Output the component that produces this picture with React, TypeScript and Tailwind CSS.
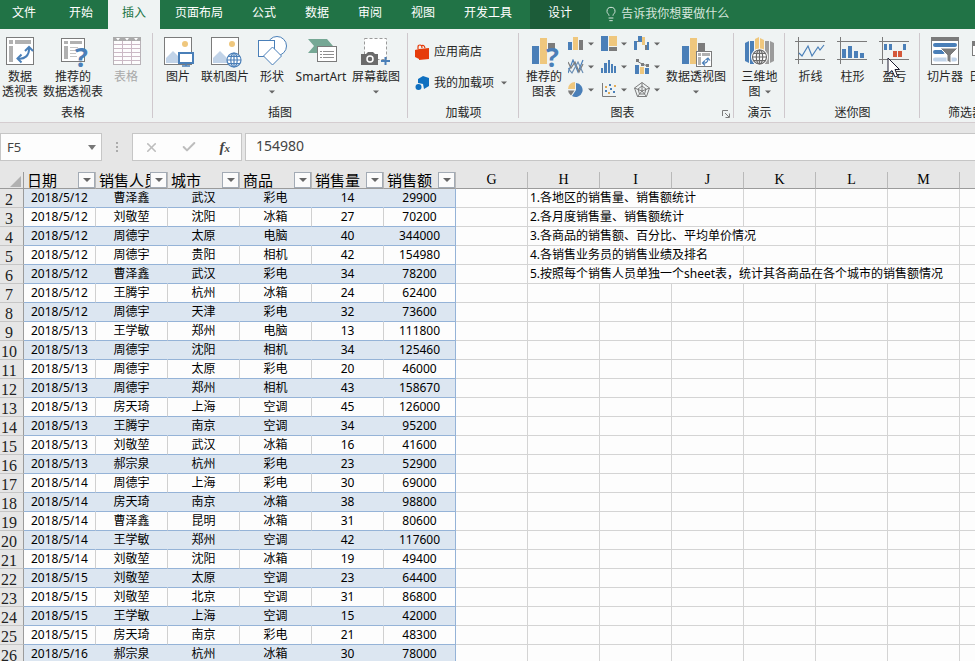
import React from 'react';
import clsx from 'clsx';
import { Check, Lightbulb, X } from 'lucide-react';

const tabs = ['开始', '插入', '页面布局', '公式', '数据', '审阅', '视图', '开发工具'];

const headers = ['日期', '销售人员', '城市', '商品', '销售量', '销售额'];
const letters = ['G', 'H', 'I', 'J', 'K', 'L', 'M', 'N'];

const rows: [string, string, string, string, number, number][] = [
  ['2018/5/12', '曹泽鑫', '武汉', '彩电', 14, 29900],
  ['2018/5/12', '刘敬堃', '沈阳', '冰箱', 27, 70200],
  ['2018/5/12', '周德宇', '太原', '电脑', 40, 344000],
  ['2018/5/12', '周德宇', '贵阳', '相机', 42, 154980],
  ['2018/5/12', '曹泽鑫', '武汉', '彩电', 34, 78200],
  ['2018/5/12', '王腾宇', '杭州', '冰箱', 24, 62400],
  ['2018/5/12', '周德宇', '天津', '彩电', 32, 73600],
  ['2018/5/13', '王学敏', '郑州', '电脑', 13, 111800],
  ['2018/5/13', '周德宇', '沈阳', '相机', 34, 125460],
  ['2018/5/13', '周德宇', '太原', '彩电', 20, 46000],
  ['2018/5/13', '周德宇', '郑州', '相机', 43, 158670],
  ['2018/5/13', '房天琦', '上海', '空调', 45, 126000],
  ['2018/5/13', '王腾宇', '南京', '空调', 34, 95200],
  ['2018/5/13', '刘敬堃', '武汉', '冰箱', 16, 41600],
  ['2018/5/13', '郝宗泉', '杭州', '彩电', 23, 52900],
  ['2018/5/14', '周德宇', '上海', '彩电', 30, 69000],
  ['2018/5/14', '房天琦', '南京', '冰箱', 38, 98800],
  ['2018/5/14', '曹泽鑫', '昆明', '冰箱', 31, 80600],
  ['2018/5/14', '王学敏', '郑州', '空调', 42, 117600],
  ['2018/5/14', '刘敬堃', '沈阳', '冰箱', 19, 49400],
  ['2018/5/15', '刘敬堃', '太原', '空调', 23, 64400],
  ['2018/5/15', '刘敬堃', '北京', '空调', 31, 86800],
  ['2018/5/15', '王学敏', '上海', '空调', 15, 42000],
  ['2018/5/15', '房天琦', '南京', '彩电', 21, 48300],
  ['2018/5/16', '郝宗泉', '杭州', '冰箱', 30, 78000]
];

// text that runs over the neighbouring empty cells, with the number of columns it covers
const notes: { text: string; span: number }[] = [
  { text: '1.各地区的销售量、销售额统计', span: 3 },
  { text: '2.各月度销售量、销售额统计', span: 3 },
  { text: '3.各商品的销售额、百分比、平均单价情况', span: 4 },
  { text: '4.各销售业务员的销售业绩及排名', span: 3 },
  { text: '5.按照每个销售人员单独一个sheet表，统计其各商品在各个城市的销售额情况', span: 6 }
];

const BLUE = '#4a7fb8';
const GOLD = '#efc77d';
const GRAY = '#7b7b7b';

const Caret: React.FC<{ className?: string }> = ({ className }) => (
  <svg className={className} width="6" height="4" viewBox="0 0 6 4">
    <path d="M0 0.5h6L3 3.5z" fill="#666" />
  </svg>
);

const Icon: React.FC<{ children: React.ReactNode }> = ({ children }) => (
  <svg className="h-8 w-8 shrink-0 overflow-visible" viewBox="0 0 32 32" fill="none" aria-hidden="true">
    {children}
  </svg>
);

const Question = () => (
  <text x="18" y="31" fontFamily="Open Sans" fontSize="27" fontWeight="700" fill={BLUE}>
    ?
  </text>
);

const Globe: React.FC<{ cx: number; cy: number; color: string }> = ({ cx, cy, color }) => (
  <g transform={`translate(${cx} ${cy})`} stroke={color} strokeWidth="1.2">
    <circle r="7" fill="#fff" />
    <ellipse rx="3.2" ry="7" />
    <path d="M0-7V7M-7 0H7M-6-3.6H6M-6 3.6H6" />
  </g>
);

const PivotIcon = () => (
  <Icon>
    <rect x="2.5" y="1.5" width="27" height="27" fill="#fff" stroke={GRAY} />
    <path d="M5 4h4v4H5zM11 4h16v4H11zM5 10h4v16H5z" fill="#b1b1b1" />
    <path d="M14 22.5C20 23.5 25.5 20 25 12" stroke={BLUE} strokeWidth="2" />
    <path d="M17.5 18.5L13.5 22.5L17.5 26.5M21 15L25 11L29 15" stroke={BLUE} strokeWidth="2" />
  </Icon>
);

const RecommendPivotIcon = () => (
  <Icon>
    <rect x="4.5" y="2.5" width="23" height="23" fill="#fff" stroke={GRAY} />
    <path d="M7 5h4v3H7zM13 5h12v3H13zM7 10h4v13H7z" fill="#b1b1b1" />
    <path d="M13 11.5h8M13 14.5h6M13 17.5h6M13 20.5h7" stroke="#c4c4c4" />
    <Question />
  </Icon>
);

const TableIcon = () => (
  <Icon>
    <rect x="3.5" y="1.5" width="27" height="27" fill="#fdfdfd" stroke="#b9b3b8" />
    <path d="M3 1h28v4H3z" fill="#ababab" />
    <path d="M6 2h4l-2 2.5zM15 2h4l-2 2.5zM24 2h4l-2 2.5z" fill="#fff" />
    <path d="M4 8.5h26M4 12.5h26M4 16.5h26M4 20.5h26M4 24.5h26M12.5 5v23M21.5 5v23" stroke="#cbb9c5" />
  </Icon>
);

const PictureBase = () => (
  <>
    <rect x="2.5" y="1.5" width="27" height="27" fill="#fff" stroke={GRAY} />
    <circle cx="23" cy="8" r="3" fill={GOLD} />
    <path d="M4 27V22L11 15L20 24V27z" fill="#c1d3e8" />
  </>
);

const PictureIcon = () => (
  <Icon>
    <PictureBase />
    <rect x="17" y="17" width="14" height="10" fill="#fff" stroke={BLUE} strokeWidth="2" />
    <path d="M24 28v2M20 30h8" stroke={BLUE} strokeWidth="1.5" />
  </Icon>
);

const OnlinePictureIcon = () => (
  <Icon>
    <PictureBase />
    <Globe cx={25} cy={24} color={BLUE} />
  </Icon>
);

const ShapesIcon = () => (
  <Icon>
    <circle cx="21" cy="10" r="9.5" fill="#fff" stroke={BLUE} />
    <rect x="2.5" y="4.5" width="16" height="16" fill="#fff" stroke={BLUE} />
    <path d="M16.5 11L25.5 20L16.5 29L7.5 20z" fill="#fff" stroke={BLUE} />
  </Icon>
);

const SmartArtIcon = () => (
  <Icon>
    <path d="M3 3H22L28 10L22 17H3L9 10z" fill="#76a895" />
    <rect x="12.5" y="10.5" width="19" height="15" fill="#fff" stroke={GRAY} />
    <path d="M15 15.5h2M15 18.5h2M15 21.5h2M18 15.5h11M18 18.5h11M18 21.5h11" stroke="#8f8f8f" />
  </Icon>
);

const ScreenshotIcon = () => (
  <Icon>
    <rect x="4.5" y="2.5" width="22" height="21" fill="#fff" stroke="#9a9a9a" strokeDasharray="3 2" />
    <path d="M1 18h5l2-2h5l2 2h3v11H1z" fill="#6b6b6b" />
    <circle cx="10" cy="23" r="3" stroke="#fff" strokeWidth="1.5" />
    <path d="M25.5 21v8M21 25h9" stroke={BLUE} strokeWidth="2" />
  </Icon>
);

const RecommendChartIcon = () => (
  <Icon>
    <path d="M4 10h7v18H4z" fill={BLUE} />
    <path d="M12 2h7v26h-7z" fill={GOLD} />
    <path d="M20 7h7v6h-7z" fill={GRAY} />
    <Question />
  </Icon>
);

const PivotChartIcon = () => (
  <Icon>
    <path d="M2 10h7v18H2z" fill={BLUE} />
    <path d="M10 2h7v26h-7z" fill={GOLD} />
    <path d="M18 7h7v8h-7z" fill={GRAY} />
    <rect x="16.5" y="15.5" width="15" height="15" fill="#fff" stroke={GRAY} />
    <path d="M18 17h3v3h-3zM22 17h8v3h-8zM18 21h3v8h-3z" fill="#b1b1b1" />
    <path d="M23 27C26 27.5 28 26 28 23M25 24.5L22.5 27L25 29.5M25.5 24L28 22L30 24.5" stroke={BLUE} strokeWidth="1.2" />
  </Icon>
);

const MapIcon = () => (
  <Icon>
    <path d="M1 7l4-2v22l-4-2zM6 5h4v23H6z" fill={BLUE} />
    <path d="M11 3l4-2v27h-4zM16 2l4 2v24h-4z" fill={GOLD} />
    <path d="M21 5h4v23h-4zM26 5l4 2v18l-4 2z" fill="#9b9b9b" />
    <circle cx="15.5" cy="21" r="8.5" fill="#fff" />
    <Globe cx={15.5} cy={21} color="#6b6b6b" />
  </Icon>
);

const SparkAxes = () => <path d="M0 5.5h30M0 23.5h30M3.5 1v27" stroke={GRAY} />;

const SparkLineIcon = () => (
  <Icon>
    <SparkAxes />
    <path d="M4 17L7 20L13 10L17 20L23 11L25 14L29 9" stroke={BLUE} strokeWidth="1.2" />
  </Icon>
);

const SparkColumnIcon = () => (
  <Icon>
    <SparkAxes />
    <path d="M5 13h4v9H5zM11 10h4v12h-4zM17 15h4v7h-4zM23 17h4v5h-4z" fill={BLUE} />
  </Icon>
);

const WinLossIcon = () => (
  <Icon>
    <SparkAxes />
    <path d="M5 8h3v6H5zM10 8h3v6h-3zM24 8h3v6h-3z" fill={BLUE} />
    <path d="M14 15h4v6h-4zM19 15h4v6h-4z" fill="#d4583a" />
  </Icon>
);

const SlicerIcon = () => (
  <Icon>
    <rect x="2.5" y="1.5" width="27" height="27" fill="#fff" stroke={GRAY} />
    <path d="M2 1h28v4H2z" fill={GRAY} />
    <path d="M6 9h20M6 16h8" stroke={BLUE} strokeWidth="4" strokeLinecap="round" />
    <path d="M6 23.5h20" stroke="#c1d3e8" strokeWidth="4" strokeLinecap="round" />
    <path d="M11 12h18l-7 7v8l-4-2v-6z" fill={GRAY} stroke="#fff" />
  </Icon>
);

const TimelineIcon = () => (
  <Icon>
    <rect x="1.5" y="5.5" width="28" height="14" fill="#fff" stroke={GRAY} />
    <path d="M2 8h27" stroke={GRAY} strokeWidth="4" />
  </Icon>
);

const StoreIcon = () => (
  <svg className="h-4 w-4 shrink-0" viewBox="0 0 16 16" fill="none">
    <path d="M0 6l4-1v10l-4-2zM4 5l10-1v11l-10 1z" fill="#e63c0a" />
    <path d="M3 5V3q0-2 2-2t2 3M6 2q3-2 4 2" stroke="#e63c0a" strokeWidth="1.2" />
  </svg>
);

const AddinIcon = () => (
  <svg className="h-4 w-4 shrink-0" viewBox="0 0 16 16">
    <path d="M3 4l5-3 6 2v8l-5 3-1-5-5-1z" fill="#0f70c0" />
    <circle cx="3.5" cy="12" r="3" fill="#0f70c0" />
  </svg>
);

const smallCharts: { label: string; art: React.ReactNode }[] = [
  {
    label: '柱形图',
    art: (
      <>
        <path d="M0 6h4v8H0z" fill={BLUE} />
        <path d="M5 1h5v13H5z" fill={GOLD} />
        <path d="M11 4h4v10h-4z" fill={GRAY} />
      </>
    )
  },
  {
    label: '层次结构图',
    art: (
      <>
        <path d="M0 0h7v15H0z" fill={BLUE} />
        <path d="M8 0h8v10H8z" fill={GOLD} />
        <path d="M8 11h8v4H8z" fill={GRAY} />
      </>
    )
  },
  {
    label: '瀑布图',
    art: (
      <>
        <path d="M0 5h3v9H0zM4 0h4v6H4zM13 6h2v8h-2z" fill={BLUE} />
        <path d="M8 1h3v8H8z" fill={GOLD} />
        <path d="M11 9h2v5h-2zM3 5h2v1H3z" fill={GRAY} />
      </>
    )
  },
  {
    label: '折线图',
    art: (
      <g fill="none" strokeWidth="1.2">
        <path d="M0 14L5 1L10 13L15 1" stroke={BLUE} />
        <path d="M0 3L3 9L7 3L11 13L15 5" stroke={GRAY} />
        <path d="M0 9L4 14L10 3L15 14" stroke="#6c8fb4" />
      </g>
    )
  },
  {
    label: '统计图',
    art: <path d="M0 9h2v5H0zM3 4h3v10H3zM7 1h2v13H7zM10 5h2v9h-2zM13 7h2v7h-2z" fill={BLUE} />
  },
  {
    label: '组合图',
    art: (
      <>
        <path d="M1 6h4v9H1z" fill={BLUE} />
        <path d="M6 8h4v7H6z" fill={GOLD} />
        <path d="M11 9h4v6h-4z" fill={BLUE} />
        <path d="M3 2L8 5L14 7" fill="none" stroke={GRAY} />
        <path d="M2 0h3v3H2zM7 4h3v3H7zM12 5h3v3h-3z" fill={GRAY} />
      </>
    )
  },
  {
    label: '饼图',
    art: (
      <>
        <path d="M8 8V1A7 7 0 1 1 4 14z" fill={BLUE} />
        <path d="M7 7V0A7 7 0 0 0 0 7z" fill={GOLD} />
        <path d="M6.5 8.5L3 13.5A7 7 0 0 1 0 8.5z" fill={GRAY} />
      </>
    )
  },
  {
    label: '散点图',
    art: (
      <>
        <path d="M1.5 1v13.5H15" fill="none" stroke={GRAY} />
        <path d="M4 8h2v2H4zM9 6h2v2H9zM12 9h2v2h-2zM8 2h2v2H8z" fill={BLUE} />
        <path d="M4 4h2v2H4zM13 3h2v2h-2zM7 10h2v2H7z" fill="#e3ab56" />
      </>
    )
  },
  {
    label: '雷达图',
    art: (
      <g fill="none" stroke={GRAY}>
        <path d="M8 0.5L15.5 6L12.5 14.5H3.5L0.5 6z" />
        <path d="M8 4L12 7L10.5 12H5.5L4 7z" />
        <path d="M8 0.5V9M15.5 6L8 9L0.5 6M12.5 14.5L8 9L3.5 14.5" />
      </g>
    )
  }
];

interface GroupProps {
  label: string;
  className: string;
  children: React.ReactNode;
}

const Group: React.FC<GroupProps> = ({ label, className, children }) => (
  <section className={clsx('relative flex shrink-0 flex-col pt-[7px]', className)}>
    <div className="flex h-[68px] items-start justify-center">{children}</div>
    <div className="mt-px text-center leading-[15px]">{label}</div>
    <span className="absolute top-1 right-0 bottom-1 w-px bg-[#cfc8cd]" />
  </section>
);

interface ToolProps {
  icon: React.ReactNode;
  lines: string[];
  className: string;
  caret?: boolean;
  disabled?: boolean;
}

const Tool: React.FC<ToolProps> = ({ icon, lines, className, caret, disabled }) => (
  <button
    type="button"
    disabled={disabled}
    className={clsx('flex shrink-0 flex-col items-center leading-[15px] whitespace-nowrap', className, disabled && 'text-[#a9a9a9]')}
  >
    {icon}
    <span className="mt-px">{lines[0]}</span>
    {(lines[1] || caret) && (
      <span className="flex h-[15px] items-center gap-1">
        {lines[1]}
        {caret && <Caret />}
      </span>
    )}
  </button>
);

const Ribbon = () => (
  <div className="relative flex h-[94px] overflow-hidden border-b border-[#d5cdd0] bg-[#eff3f3] text-[#262626]">
    <Group label="表格" className="w-[153px] pr-[7px]">
      <Tool icon={<PivotIcon />} lines={['数据', '透视表']} className="w-10" />
      <Tool icon={<RecommendPivotIcon />} lines={['推荐的', '数据透视表']} className="w-[66px]" />
      <Tool icon={<TableIcon />} lines={['表格']} className="w-10" disabled />
    </Group>
    <Group label="插图" className="w-[255px] pr-px">
      <Tool icon={<PictureIcon />} lines={['图片']} className="w-9" />
      <Tool icon={<OnlinePictureIcon />} lines={['联机图片']} className="w-[58px]" />
      <Tool icon={<ShapesIcon />} lines={['形状']} className="w-9" caret />
      <Tool icon={<SmartArtIcon />} lines={['SmartArt']} className="w-[62px]" />
      <Tool icon={<ScreenshotIcon />} lines={['屏幕截图']} className="w-12" caret />
    </Group>
    <Group label="加载项" className="w-[111px]">
      <div className="flex w-full flex-col gap-[15px] pt-2 pl-[7px]">
        <button type="button" className="flex h-4 items-center gap-[3px]">
          <StoreIcon />
          应用商店
        </button>
        <button type="button" className="flex h-4 items-center gap-[3px]">
          <AddinIcon />
          我的加载项
          <Caret className="ml-1" />
        </button>
      </div>
    </Group>
    <Group label="图表" className="w-[215px] pr-2">
      <Tool icon={<RecommendChartIcon />} lines={['推荐的', '图表']} className="w-12" />
      <div className="grid shrink-0 grid-cols-3 gap-y-[7px]">
        {smallCharts.map((c) => (
          <button key={c.label} type="button" aria-label={c.label} className="flex w-[33px] items-center gap-1">
            <svg className="h-4 w-4" viewBox="0 0 16 16">
              {c.art}
            </svg>
            <Caret />
          </button>
        ))}
      </div>
      <Tool icon={<PivotChartIcon />} lines={['数据透视图']} className="w-[58px]" caret />
      <button type="button" aria-label="图表选项" className="absolute right-1 bottom-1">
        <svg width="8" height="8" viewBox="0 0 8 8" fill="none" stroke="#7b7b7b">
          <path d="M0.5 6V0.5H6M3 3L7 7M7.5 3.5V7.5H3.5" />
        </svg>
      </button>
    </Group>
    <Group label="演示" className="w-[51px]">
      <Tool icon={<MapIcon />} lines={['三维地', '图']} className="w-12" caret />
    </Group>
    <Group label="迷你图" className="w-[135px]">
      <Tool icon={<SparkLineIcon />} lines={['折线']} className="w-[42px]" />
      <Tool icon={<SparkColumnIcon />} lines={['柱形']} className="w-[42px]" />
      <Tool icon={<WinLossIcon />} lines={['盈亏']} className="w-[42px]" />
    </Group>
    <Group label="筛选器" className="w-[92px]">
      <Tool icon={<SlicerIcon />} lines={['切片器']} className="w-[42px]" />
      <Tool icon={<TimelineIcon />} lines={['日程表']} className="w-[42px]" />
    </Group>
  </div>
);

const FormulaBar = () => (
  <div className="flex items-center bg-[#e6e6e6] pt-[10px] pb-[11px] text-[#444]">
    <div className="relative w-[102px] shrink-0">
      <input
        aria-label="名称框"
        defaultValue="F5"
        className="block h-7 w-full border border-[#c6c6c6] bg-[#fdfdfd] pb-px pl-[6px] text-[13px] outline-none"
      />
      <svg className="absolute top-3 right-[6px]" width="8" height="5" viewBox="0 0 8 5">
        <path d="M0 0h8L4 5z" fill="#777" />
      </svg>
    </div>
    <svg className="mx-[14px] shrink-0" width="2" height="12" viewBox="0 0 2 12">
      <path d="M0 1h2v2H0zM0 5h2v2H0zM0 9h2v2H0z" fill="#ababab" />
    </svg>
    <div className="flex h-7 w-[110px] shrink-0 items-center justify-around border border-[#c6c6c6] bg-[#fdfdfd]">
      <button type="button" aria-label="取消">
        <X size={15} color="#bdbdbd" strokeWidth={2.5} />
      </button>
      <button type="button" aria-label="输入">
        <Check size={16} color="#bdbdbd" strokeWidth={3} />
      </button>
      <button type="button" aria-label="插入函数" className="font-['Liberation_Serif',serif] text-[15px] leading-5 font-bold italic">
        f<span className="text-[11px]">x</span>
      </button>
    </div>
    <input
      aria-label="编辑栏"
      defaultValue="154980"
      className="ml-[3px] block h-7 min-w-0 flex-1 border border-r-0 border-[#c6c6c6] bg-[#fdfdfd] pb-[3px] pl-[10px] text-[14px] outline-none"
    />
  </div>
);

const Sheet = () => (
  <table className="w-[1032px] table-fixed border-separate border-spacing-0 bg-[#fdfdfd] text-center leading-[18px] text-black">
    <colgroup>
      <col className="w-6" />
      {[...headers, ...letters].map((h) => (
        <col key={h} className="w-[72px]" />
      ))}
    </colgroup>
    <thead>
      <tr className="bg-[#e6e6e6]">
        <th className="border-r border-b border-[#9b9b9b] p-0">
          <svg className="mt-[2px] ml-[10px] block" width="11" height="11" viewBox="0 0 11 11">
            <path d="M11 0v11H0z" fill="#b1b1b1" />
          </svg>
        </th>
        {headers.map((h) => (
          <th key={h} className="h-[17px] border-r border-b border-r-[#b9b9b9] border-b-[#9b9b9b] p-0 font-normal">
            <div className="flex h-4 items-center justify-between pl-[3px] text-[15px] leading-4">
              <span className="min-w-0 overflow-hidden whitespace-nowrap">{h}</span>
              <button
                type="button"
                aria-label={`筛选${h}`}
                className="flex h-4 w-[17px] shrink-0 items-center justify-center border border-[#a3abb5] bg-[#fbfbfb]"
              >
                <svg width="8" height="4" viewBox="0 0 8 4">
                  <path d="M0 0h8L4 4z" fill="#666" />
                </svg>
              </button>
            </div>
          </th>
        ))}
        {letters.map((l) => (
          <th
            key={l}
            className="border-r border-b border-r-[#b9b9b9] border-b-[#9b9b9b] p-0 font-['Liberation_Serif',serif] text-[14px] leading-4 font-normal"
          >
            {l}
          </th>
        ))}
      </tr>
    </thead>
    <tbody>
      {rows.map((row, i) => {
        const banded = i % 2 === 0;
        const note = notes[i];
        const blanks = note ? 7 - note.span : 7;
        return (
          <tr key={i}>
            <th className="border-r border-b border-r-[#9b9b9b] border-b-[#c6c6c6] bg-[#e6e6e6] p-0 font-['Liberation_Serif',serif] text-[16px] font-normal text-[#222]">
              <div className="h-[18px] pr-[5px] leading-[22px]">{i + 2}</div>
            </th>
            {row.map((value, c) => (
              <td
                key={c}
                className={clsx(
                  'h-[19px] border-r border-b border-b-[#95b3d7] p-0',
                  banded ? 'bg-[#dce6f1]' : 'bg-[#fdfdfd]',
                  c === 5 ? 'border-r-[#95b3d7]' : banded ? 'border-r-[#dce6f1]' : 'border-r-[#d0d0d0]'
                )}
              >
                {value}
              </td>
            ))}
            <td className="border-r border-b border-[#d4d4d4] p-0" />
            {note && (
              <td colSpan={note.span} className="border-r border-b border-[#d4d4d4] p-0 pl-[2px] text-left whitespace-nowrap">
                {note.text}
              </td>
            )}
            {Array.from({ length: blanks }, (_, b) => (
              <td key={`b${b}`} className="border-r border-b border-[#d4d4d4] p-0" />
            ))}
          </tr>
        );
      })}
    </tbody>
  </table>
);

const App: React.FC = () => {
  return (
    <div className="relative h-screen overflow-hidden bg-[#fdfdfd] font-['Noto_Sans','Noto_Sans_CJK_SC',sans-serif] text-[12px]">
      <nav className="flex h-[29px] gap-px bg-[#217346] text-white">
        <button type="button" className="w-[54px] shrink-0 pb-[3px] pl-3 text-left">
          文件
        </button>
        {tabs.map((t) => (
          <button
            key={t}
            type="button"
            className={clsx('shrink-0 px-[14px] pb-[3px]', t === '插入' && 'bg-[#eff3f3] text-[#217346]')}
          >
            {t}
          </button>
        ))}
        <button type="button" className="ml-[3px] w-[60px] shrink-0 bg-[#1c5c39] pb-[3px]">
          设计
        </button>
        <button type="button" className="ml-3 flex shrink-0 items-center gap-[2px] pb-px text-[#d5e5dc]">
          <Lightbulb size={16} strokeWidth={1.5} />
          告诉我你想要做什么
        </button>
      </nav>
      <Ribbon />
      <FormulaBar />
      <Sheet />
      <svg className="pointer-events-none absolute top-[57px] left-[887px]" width="14" height="21" viewBox="0 0 14 21">
        <path d="M1 1V17L5 13.5L8 20L10.5 19L8 12.5H12.5z" fill="#fff" stroke="#1c1c30" />
      </svg>
    </div>
  );
};

export default App;
